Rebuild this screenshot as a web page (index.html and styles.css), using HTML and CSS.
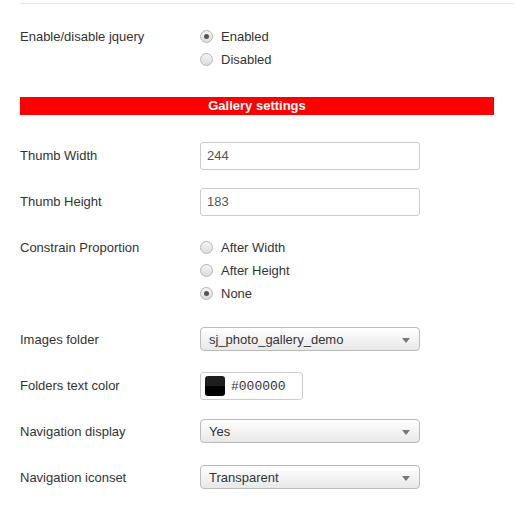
FILE: index.html
```html
<!DOCTYPE html>
<html>
<head>
<meta charset="utf-8">
<link rel="stylesheet" href="styles.css">
</head>
<body>
<div class="page">
  <div class="topline"></div>

  <div class="row row-jquery">
    <div class="label">Enable/disable jquery</div>
    <div class="radios">
      <label class="radio"><span class="dot checked"></span>Enabled</label>
      <label class="radio"><span class="dot"></span>Disabled</label>
    </div>
  </div>

  <div class="section">Gallery settings</div>

  <div class="row row-input first">
    <div class="label">Thumb Width</div>
    <div class="input">244</div>
  </div>

  <div class="row row-input">
    <div class="label">Thumb Height</div>
    <div class="input">183</div>
  </div>

  <div class="row row-radios">
    <div class="label">Constrain Proportion</div>
    <div class="radios">
      <label class="radio"><span class="dot"></span>After Width</label>
      <label class="radio"><span class="dot"></span>After Height</label>
      <label class="radio"><span class="dot checked"></span>None</label>
    </div>
  </div>

  <div class="row row-select">
    <div class="label">Images folder</div>
    <div class="select">sj_photo_gallery_demo<span class="arrow"></span></div>
  </div>

  <div class="row row-color">
    <div class="label">Folders text color</div>
    <div class="color"><span class="swatch"></span><span class="hex">#000000</span></div>
  </div>

  <div class="row row-select nav1">
    <div class="label">Navigation display</div>
    <div class="select">Yes<span class="arrow"></span></div>
  </div>

  <div class="row row-select nav2">
    <div class="label">Navigation iconset</div>
    <div class="select">Transparent<span class="arrow"></span></div>
  </div>
</div>
</body>
</html>
```

FILE: styles.css
```css
html, body {
  margin: 0;
  padding: 0;
  background: #fff;
}

body {
  font-family: "Liberation Sans", Arial, sans-serif;
  font-size: 13px;
  color: #333;
}

.page {
  padding-left: 20px;
  padding-top: 3px;
}

.topline {
  height: 1px;
  background: #e8e8e8;
}

.row {
  display: flex;
  align-items: flex-start;
}

.label {
  width: 180px;
  flex: none;
  color: #333;
}

.row-jquery {
  margin-top: 21px;
}

.row-jquery .label,
.row-radios .label {
  line-height: 23px;
}

.radios {
  display: flex;
  flex-direction: column;
}

.radio {
  display: flex;
  align-items: center;
  height: 23px;
  line-height: 23px;
  color: #333;
}

.dot {
  width: 11px;
  height: 11px;
  border-radius: 50%;
  border: 1px solid #b5b5b5;
  background: linear-gradient(#f4f4f4, #dcdcdc);
  margin-right: 8px;
  position: relative;
  box-sizing: content-box;
}

.dot.checked::after {
  content: "";
  position: absolute;
  left: 3px;
  top: 3px;
  width: 5px;
  height: 5px;
  border-radius: 50%;
  background: #555;
}

.section {
  margin-top: 26px;
  margin-right: 20px;
  height: 18px;
  line-height: 18px;
  background: #ff0000;
  color: #fff;
  font-weight: bold;
  text-align: center;
}

.row-input {
  margin-top: 18px;
}

.row-input.first {
  margin-top: 27px;
}

.row-input .label {
  line-height: 28px;
}

.input {
  box-sizing: border-box;
  width: 220px;
  height: 28px;
  line-height: 26px;
  padding: 0 6px;
  border: 1px solid #ccc;
  border-radius: 3px;
  color: #555;
  background: #fff;
}

.row-radios {
  margin-top: 20px;
}

.row-select {
  margin-top: 22px;
}

.row-select .label {
  line-height: 22px;
  padding-top: 2px;
}

.select {
  box-sizing: border-box;
  width: 220px;
  height: 24px;
  line-height: 23px;
  padding: 0 8px;
  border: 1px solid #bbb;
  border-radius: 4px;
  background: linear-gradient(#ffffff, #e8e8e8);
  color: #333;
  position: relative;
}

.arrow {
  position: absolute;
  right: 9px;
  top: 10px;
  width: 0;
  height: 0;
  border-left: 4px solid transparent;
  border-right: 4px solid transparent;
  border-top: 5px solid #777;
}

.row-color {
  margin-top: 21px;
}

.row-color .label {
  line-height: 28px;
}

.color {
  box-sizing: border-box;
  width: 103px;
  height: 28px;
  border: 1px solid #ccc;
  border-radius: 3px;
  display: flex;
  align-items: center;
  padding-left: 4px;
  background: #fff;
}

.swatch {
  width: 20px;
  height: 20px;
  border-radius: 3px;
  background: linear-gradient(#1e1e1e 50%, #000 50%);
  margin-right: 6px;
}

.hex {
  font-family: "Liberation Mono", "DejaVu Sans Mono", monospace;
  font-size: 13px;
  color: #333;
}

.nav1 {
  margin-top: 19px;
}

.nav2 {
  margin-top: 22px;
}
```
